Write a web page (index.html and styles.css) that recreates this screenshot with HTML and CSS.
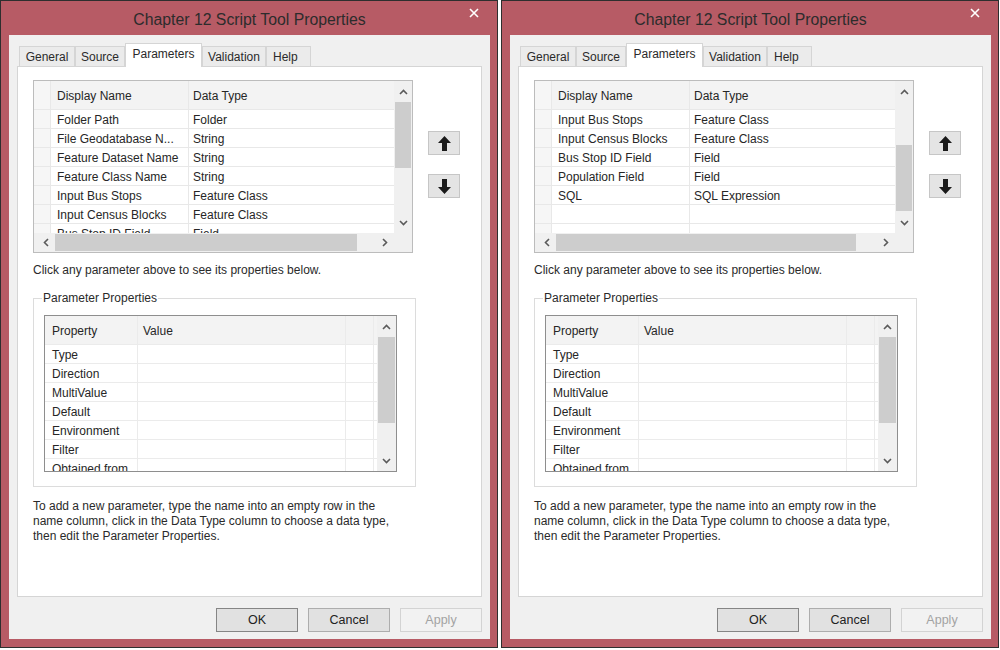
FILE: index.html
```html
<!DOCTYPE html>
<html lang="en">
<head>
<meta charset="utf-8">
<title>Chapter 12 Script Tool Properties</title>
<link rel="stylesheet" href="styles.css">
</head>
<body>
<div class="desk">

  <!-- LEFT WINDOW -->
  <div class="window">
    <div class="titlebar">
      <span></span>
      <span class="title">Chapter 12 Script Tool Properties</span>
      <span class="close"><svg width="10" height="10" viewBox="0 0 10 10"><path d="M1 1 L9 9 M9 1 L1 9" stroke="#fff" stroke-width="1.6"/></svg></span>
    </div>
    <div class="client">
      <div class="tabs">
        <div class="tab">General</div>
        <div class="tab">Source</div>
        <div class="tab active">Parameters</div>
        <div class="tab">Validation</div>
        <div class="tab">Help</div>
      </div>
      <div class="panel">
        <div class="top">
          <div class="pgrid">
            <div class="gbody">
              <div class="gcells">
                <div class="grow ghead"><span class="rh"></span><span class="gc">Display Name</span><span class="gc">Data Type</span></div>
                <div class="grow"><span class="rh"></span><span class="gc">Folder Path</span><span class="gc">Folder</span></div>
                <div class="grow"><span class="rh"></span><span class="gc">File Geodatabase N...</span><span class="gc">String</span></div>
                <div class="grow"><span class="rh"></span><span class="gc">Feature Dataset Name</span><span class="gc">String</span></div>
                <div class="grow"><span class="rh"></span><span class="gc">Feature Class Name</span><span class="gc">String</span></div>
                <div class="grow"><span class="rh"></span><span class="gc">Input Bus Stops</span><span class="gc">Feature Class</span></div>
                <div class="grow"><span class="rh"></span><span class="gc">Input Census Blocks</span><span class="gc">Feature Class</span></div>
                <div class="grow"><span class="rh"></span><span class="gc">Bus Stop ID Field</span><span class="gc">Field</span></div>
              </div>
              <div class="vscroll">
                <div class="sarrow"><svg width="9" height="6" viewBox="0 0 9 6"><path d="M1 5 L4.5 1.5 L8 5" fill="none" stroke="#5a5a5a" stroke-width="1.6"/></svg></div>
                <div class="strack"><div class="vthumb" style="margin-top:0px;height:66px"></div></div>
                <div class="sarrow"><svg width="9" height="6" viewBox="0 0 9 6"><path d="M1 1 L4.5 4.5 L8 1" fill="none" stroke="#5a5a5a" stroke-width="1.6"/></svg></div>
              </div>
            </div>
            <div class="hbar">
              <div class="hscroll">
                <div class="harrow"><svg width="6" height="9" viewBox="0 0 6 9"><path d="M5 1 L1.5 4.5 L5 8" fill="none" stroke="#5a5a5a" stroke-width="1.6"/></svg></div>
                <div class="htrack"><div class="hthumb" style="width:302px"></div></div>
                <div class="harrow"><svg width="6" height="9" viewBox="0 0 6 9"><path d="M1 1 L4.5 4.5 L1 8" fill="none" stroke="#5a5a5a" stroke-width="1.6"/></svg></div>
              </div>
              <div class="corner"></div>
            </div>
          </div>
          <div class="movers">
            <div class="mover"><svg width="13" height="15" viewBox="0 0 13 15"><path d="M6.5 0 L13 7 H9 V15 H4 V7 H0 Z" fill="#1a1a1a"/></svg></div>
            <div class="mover"><svg width="13" height="15" viewBox="0 0 13 15"><path d="M6.5 15 L13 8 H9 V0 H4 V8 H0 Z" fill="#1a1a1a"/></svg></div>
          </div>
        </div>
        <p class="hint">Click any parameter above to see its properties below.</p>
        <fieldset class="group">
          <legend>Parameter Properties</legend>
          <div class="propgrid">
            <div class="pcells">
              <div class="prow phead"><span class="pc">Property</span><span class="pc">Value</span><span class="pc"></span><span class="pc"></span></div>
              <div class="prow"><span class="pc">Type</span><span class="pc"></span><span class="pc"></span><span class="pc"></span></div>
              <div class="prow"><span class="pc">Direction</span><span class="pc"></span><span class="pc"></span><span class="pc"></span></div>
              <div class="prow"><span class="pc">MultiValue</span><span class="pc"></span><span class="pc"></span><span class="pc"></span></div>
              <div class="prow"><span class="pc">Default</span><span class="pc"></span><span class="pc"></span><span class="pc"></span></div>
              <div class="prow"><span class="pc">Environment</span><span class="pc"></span><span class="pc"></span><span class="pc"></span></div>
              <div class="prow"><span class="pc">Filter</span><span class="pc"></span><span class="pc"></span><span class="pc"></span></div>
              <div class="prow"><span class="pc">Obtained from</span><span class="pc"></span><span class="pc"></span><span class="pc"></span></div>
            </div>
            <div class="vscroll pv">
              <div class="sarrow"><svg width="9" height="6" viewBox="0 0 9 6"><path d="M1 5 L4.5 1.5 L8 5" fill="none" stroke="#5a5a5a" stroke-width="1.6"/></svg></div>
              <div class="strack"><div class="vthumb" style="margin-top:0px;height:86px"></div></div>
              <div class="sarrow"><svg width="9" height="6" viewBox="0 0 9 6"><path d="M1 1 L4.5 4.5 L8 1" fill="none" stroke="#5a5a5a" stroke-width="1.6"/></svg></div>
            </div>
          </div>
        </fieldset>
        <p class="note">To add a new parameter, type the name into an empty row in the<br>name column, click in the Data Type column to choose a data type,<br>then edit the Parameter Properties.</p>
      </div>
      <div class="actions">
        <button class="btn default">OK</button>
        <button class="btn">Cancel</button>
        <button class="btn disabled">Apply</button>
      </div>
    </div>
  </div>

  <!-- RIGHT WINDOW -->
  <div class="window">
    <div class="titlebar">
      <span></span>
      <span class="title">Chapter 12 Script Tool Properties</span>
      <span class="close"><svg width="10" height="10" viewBox="0 0 10 10"><path d="M1 1 L9 9 M9 1 L1 9" stroke="#fff" stroke-width="1.6"/></svg></span>
    </div>
    <div class="client">
      <div class="tabs">
        <div class="tab">General</div>
        <div class="tab">Source</div>
        <div class="tab active">Parameters</div>
        <div class="tab">Validation</div>
        <div class="tab">Help</div>
      </div>
      <div class="panel">
        <div class="top">
          <div class="pgrid">
            <div class="gbody">
              <div class="gcells">
                <div class="grow ghead"><span class="rh"></span><span class="gc">Display Name</span><span class="gc">Data Type</span></div>
                <div class="grow"><span class="rh"></span><span class="gc">Input Bus Stops</span><span class="gc">Feature Class</span></div>
                <div class="grow"><span class="rh"></span><span class="gc">Input Census Blocks</span><span class="gc">Feature Class</span></div>
                <div class="grow"><span class="rh"></span><span class="gc">Bus Stop ID Field</span><span class="gc">Field</span></div>
                <div class="grow"><span class="rh"></span><span class="gc">Population Field</span><span class="gc">Field</span></div>
                <div class="grow"><span class="rh"></span><span class="gc">SQL</span><span class="gc">SQL Expression</span></div>
                <div class="grow"><span class="rh"></span><span class="gc"></span><span class="gc"></span></div>
                <div class="grow"><span class="rh"></span><span class="gc"></span><span class="gc"></span></div>
              </div>
              <div class="vscroll">
                <div class="sarrow"><svg width="9" height="6" viewBox="0 0 9 6"><path d="M1 5 L4.5 1.5 L8 5" fill="none" stroke="#5a5a5a" stroke-width="1.6"/></svg></div>
                <div class="strack"><div class="vthumb" style="margin-top:43px;height:66px"></div></div>
                <div class="sarrow"><svg width="9" height="6" viewBox="0 0 9 6"><path d="M1 1 L4.5 4.5 L8 1" fill="none" stroke="#5a5a5a" stroke-width="1.6"/></svg></div>
              </div>
            </div>
            <div class="hbar">
              <div class="hscroll">
                <div class="harrow"><svg width="6" height="9" viewBox="0 0 6 9"><path d="M5 1 L1.5 4.5 L5 8" fill="none" stroke="#5a5a5a" stroke-width="1.6"/></svg></div>
                <div class="htrack"><div class="hthumb" style="width:300px"></div></div>
                <div class="harrow"><svg width="6" height="9" viewBox="0 0 6 9"><path d="M1 1 L4.5 4.5 L1 8" fill="none" stroke="#5a5a5a" stroke-width="1.6"/></svg></div>
              </div>
              <div class="corner"></div>
            </div>
          </div>
          <div class="movers">
            <div class="mover"><svg width="13" height="15" viewBox="0 0 13 15"><path d="M6.5 0 L13 7 H9 V15 H4 V7 H0 Z" fill="#1a1a1a"/></svg></div>
            <div class="mover"><svg width="13" height="15" viewBox="0 0 13 15"><path d="M6.5 15 L13 8 H9 V0 H4 V8 H0 Z" fill="#1a1a1a"/></svg></div>
          </div>
        </div>
        <p class="hint">Click any parameter above to see its properties below.</p>
        <fieldset class="group">
          <legend>Parameter Properties</legend>
          <div class="propgrid">
            <div class="pcells">
              <div class="prow phead"><span class="pc">Property</span><span class="pc">Value</span><span class="pc"></span><span class="pc"></span></div>
              <div class="prow"><span class="pc">Type</span><span class="pc"></span><span class="pc"></span><span class="pc"></span></div>
              <div class="prow"><span class="pc">Direction</span><span class="pc"></span><span class="pc"></span><span class="pc"></span></div>
              <div class="prow"><span class="pc">MultiValue</span><span class="pc"></span><span class="pc"></span><span class="pc"></span></div>
              <div class="prow"><span class="pc">Default</span><span class="pc"></span><span class="pc"></span><span class="pc"></span></div>
              <div class="prow"><span class="pc">Environment</span><span class="pc"></span><span class="pc"></span><span class="pc"></span></div>
              <div class="prow"><span class="pc">Filter</span><span class="pc"></span><span class="pc"></span><span class="pc"></span></div>
              <div class="prow"><span class="pc">Obtained from</span><span class="pc"></span><span class="pc"></span><span class="pc"></span></div>
            </div>
            <div class="vscroll pv">
              <div class="sarrow"><svg width="9" height="6" viewBox="0 0 9 6"><path d="M1 5 L4.5 1.5 L8 5" fill="none" stroke="#5a5a5a" stroke-width="1.6"/></svg></div>
              <div class="strack"><div class="vthumb" style="margin-top:0px;height:86px"></div></div>
              <div class="sarrow"><svg width="9" height="6" viewBox="0 0 9 6"><path d="M1 1 L4.5 4.5 L8 1" fill="none" stroke="#5a5a5a" stroke-width="1.6"/></svg></div>
            </div>
          </div>
        </fieldset>
        <p class="note">To add a new parameter, type the name into an empty row in the<br>name column, click in the Data Type column to choose a data type,<br>then edit the Parameter Properties.</p>
      </div>
      <div class="actions">
        <button class="btn default">OK</button>
        <button class="btn">Cancel</button>
        <button class="btn disabled">Apply</button>
      </div>
    </div>
  </div>

</div>
</body>
</html>
```

FILE: styles.css
```css
* { box-sizing: border-box; }

html, body {
  margin: 0;
  padding: 0;
}

body {
  width: 1000px;
  height: 650px;
  overflow: hidden;
  background: #ffffff;
  font-family: "Liberation Sans", Arial, sans-serif;
  font-size: 12px;
  color: #262626;
}

.desk {
  display: flex;
  gap: 3px;
}

.window {
  width: 498px;
  height: 648px;
  border: 1px solid #2e2e2e;
  background: #b75b65;
  display: flex;
  flex-direction: column;
  padding: 0 7px 8px 8px;
}

.titlebar {
  height: 34px;
  flex: none;
  display: grid;
  grid-template-columns: 1fr auto 1fr;
  align-items: center;
  padding-top: 3px;
}

.title {
  font-size: 15.8px;
  color: #2c2c2c;
  white-space: nowrap;
}

.close {
  justify-self: end;
  margin-right: 11px;
  margin-top: -13px;
  display: flex;
}

.client {
  flex: 1;
  background: #f0f0f0;
  display: flex;
  flex-direction: column;
  padding: 8px 8px 7px 8px;
}

/* Tabs */
.tabs {
  height: 23px;
  flex: none;
  display: flex;
  align-items: flex-end;
  padding-left: 2px;
  position: relative;
  z-index: 1;
}

.tab {
  height: 20px;
  border: 1px solid #d5d5d5;
  border-bottom: none;
  background: #ebebeb;
  display: flex;
  align-items: center;
  justify-content: center;
  color: #2a2a2a;
  padding-top: 1px;
}

.tab:nth-child(1) { width: 56px; }
.tab:nth-child(2) { width: 50px; }
.tab:nth-child(3) { width: 77px; }
.tab:nth-child(4) { width: 64px; }
.tab:nth-child(5) { width: 45px; justify-content: flex-start; padding-left: 6px; }

.tab.active {
  height: 24px;
  background: #ffffff;
  margin-bottom: -1px;
  padding-top: 0;
  padding-bottom: 3px;
}

.panel {
  flex: 1;
  background: #ffffff;
  border: 1px solid #d5d5d5;
  padding: 13px 0 0 15px;
}

/* Parameter list grid */
.top {
  display: flex;
}

.pgrid {
  width: 380px;
  height: 173px;
  border: 1px solid #bcbcbc;
  display: flex;
  flex-direction: column;
}

.gbody {
  height: 152px;
  display: flex;
}

.gcells {
  flex: 1;
  overflow: hidden;
}

.grow {
  display: grid;
  grid-template-columns: 17px 138px 1fr;
  height: 19px;
  border-bottom: 1px solid #e8e8e8;
}

.grow.ghead {
  height: 29px;
  background: #f3f3f3;
}

.rh {
  background: #f6f6f6;
  border-right: 1px solid #e8e8e8;
}

.gc {
  display: flex;
  align-items: center;
  padding-left: 6px;
  padding-top: 2px;
  white-space: nowrap;
  overflow: hidden;
  border-right: 1px solid #e8e8e8;
}

.gc:last-child {
  border-right: none;
  padding-left: 4px;
}

.vscroll {
  width: 18px;
  flex: none;
  background: #f0f0f0;
  display: flex;
  flex-direction: column;
}

.vscroll.pv {
  width: 19px;
}

.sarrow {
  height: 21px;
  flex: none;
  display: flex;
  align-items: center;
  justify-content: center;
}

.strack {
  flex: 1;
}

.vthumb {
  margin-left: 1px;
  margin-right: 1px;
  background: #cdcdcd;
}

.hbar {
  height: 19px;
  display: flex;
}

.hscroll {
  flex: 1;
  display: flex;
  background: #f0f0f0;
}

.harrow {
  width: 21px;
  flex: none;
  display: flex;
  align-items: center;
  justify-content: center;
  padding-left: 3px;
}

.htrack {
  flex: 1;
  display: flex;
  align-items: center;
}

.hthumb {
  height: 17px;
  background: #cdcdcd;
}

.corner {
  width: 18px;
  background: #f0f0f0;
}

.movers {
  display: flex;
  flex-direction: column;
  gap: 19px;
  margin-left: 15px;
  padding-top: 51px;
}

.mover {
  width: 32px;
  height: 24px;
  border: 1px solid #c6c6c6;
  background: #e4e4e4;
  display: flex;
  align-items: center;
  justify-content: center;
}

/* Texts */
.hint {
  margin: 10px 0 0 0;
  line-height: 15px;
  color: #2a2a2a;
}

.note {
  margin: 12px 0 0 0;
  line-height: 15px;
  color: #2a2a2a;
}

/* Group box */
.group {
  width: 383px;
  margin: 13px 0 0 0;
  padding: 9px 18px 14px 10px;
  border: 1px solid #dcdcdc;
  min-width: 0;
}

.group legend {
  padding: 0 1px;
  margin-left: -2px;
  line-height: 15px;
  color: #2a2a2a;
}

.propgrid {
  width: 353px;
  height: 157px;
  border: 1px solid #8e8e8e;
  display: flex;
}

.pcells {
  flex: 1;
  overflow: hidden;
}

.prow {
  display: grid;
  grid-template-columns: 93px 208px 28px 1fr;
  height: 19px;
  border-bottom: 1px solid #ebebeb;
}

.prow.phead {
  height: 29px;
  background: #f3f3f3;
}

.pc {
  display: flex;
  align-items: center;
  padding-left: 7px;
  padding-top: 2px;
  white-space: nowrap;
  overflow: hidden;
  border-right: 1px solid #ebebeb;
}

.pc:nth-child(2) { padding-left: 5px; }
.pc:last-child { border-right: none; }

/* Buttons */
.actions {
  flex: none;
  display: flex;
  justify-content: flex-end;
  gap: 10px;
  margin-top: 11px;
}

.btn {
  width: 82px;
  height: 24px;
  margin: 0;
  padding: 0;
  border: 1px solid #adadad;
  background: #e1e1e1;
  font-family: inherit;
  font-size: 12.5px;
  color: #222;
  display: flex;
  align-items: center;
  justify-content: center;
}

.btn.default {
  border-color: #858585;
}

.btn.disabled {
  border-color: #d3d3d3;
  background: #f2f2f2;
  color: #a3a3a3;
}
```
